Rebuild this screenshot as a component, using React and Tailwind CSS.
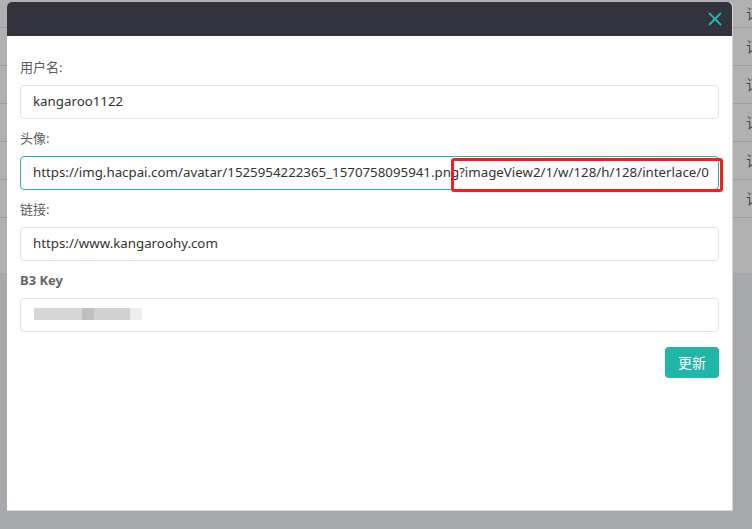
import { X } from 'lucide-react';

// Profile settings modal over a dimmed list page.

const rows = [0, 1, 2, 3, 4, 5];

function Field({ label, bold, value, active, children }) {
  return (
    <div className="mt-[9px]">
      <div
        className={`h-[20px] leading-[20px] text-[13px] text-[#5c5c5c] mb-[8px] ${
          bold ? 'font-bold text-[#666]' : ''
        }`}
      >
        {label}
      </div>
      <div
        className={`h-[34px] rounded-[4px] border bg-white px-[12px] flex items-center overflow-hidden whitespace-nowrap text-[13.3px] text-[#333] ${
          active ? 'border-[#22b4a8]' : 'border-[#e3e3e3]'
        }`}
      >
        {children || value}
      </div>
    </div>
  );
}

export default function App() {
  return (
    <div
      className="relative w-[752px] h-[529px] overflow-hidden bg-[#a7a8ac]"
      style={{ fontFamily: '"Noto Sans", "Noto Sans CJK SC", sans-serif' }}
    >
      {/* dimmed page behind the modal */}
      <div className="h-[273px] bg-[#b1b1b1]">
        <div className="h-[28px] border-b border-[#9c9c9c] flex justify-end items-center">
          <span className="mr-[-8px] text-[14px] text-[#4e4538]">订</span>
        </div>
        {rows.slice(1).map((r) => (
          <div
            key={r}
            className="h-[38px] border-b border-[#9c9c9c] flex justify-end items-center"
          >
            <span className="mr-[-8px] text-[14px] text-[#4e4538]">订</span>
          </div>
        ))}
      </div>

      {/* modal */}
      <div className="absolute left-[7px] top-[2px] w-[726px] h-[509px] bg-white rounded-t-[5px] border-r border-b border-[#d6d6d6]">
        <div className="h-[34px] bg-[#32333d] rounded-t-[5px] flex items-center justify-end pr-[6px]">
          <X size={22} strokeWidth={2} className="text-[#26b6aa]" />
        </div>
        <div className="px-[13px] pt-[12px]">
          <Field label="用户名:" value="kangaroo1122" />
          <Field
            label="头像:"
            active
            value="https://img.hacpai.com/avatar/1525954222365_1570758095941.png?imageView2/1/w/128/h/128/interlace/0"
          />
          <Field label="链接:" value="https://www.kangaroohy.com" />
          <Field label="B3 Key" bold>
            <div className="flex h-[12px] ml-[1px] -mt-[2px]">
              <div className="w-[48px] bg-[#d5d5d5]" />
              <div className="w-[12px] bg-[#bfbfbf]" />
              <div className="w-[36px] bg-[#d1d1d1]" />
              <div className="w-[12px] bg-[#ececec]" />
            </div>
          </Field>
          <div className="flex justify-end mt-[15px]">
            <button
              type="button"
              className="w-[54px] h-[31px] rounded-[4px] bg-[#20b5a9] text-white text-[14px]"
            >
              更新
            </button>
          </div>
        </div>
      </div>

      {/* red annotation box */}
      <div className="absolute left-[451px] top-[158px] w-[272px] h-[34px] border-[3px] border-[#f51d1d] rounded-[3px]" />
    </div>
  );
}
